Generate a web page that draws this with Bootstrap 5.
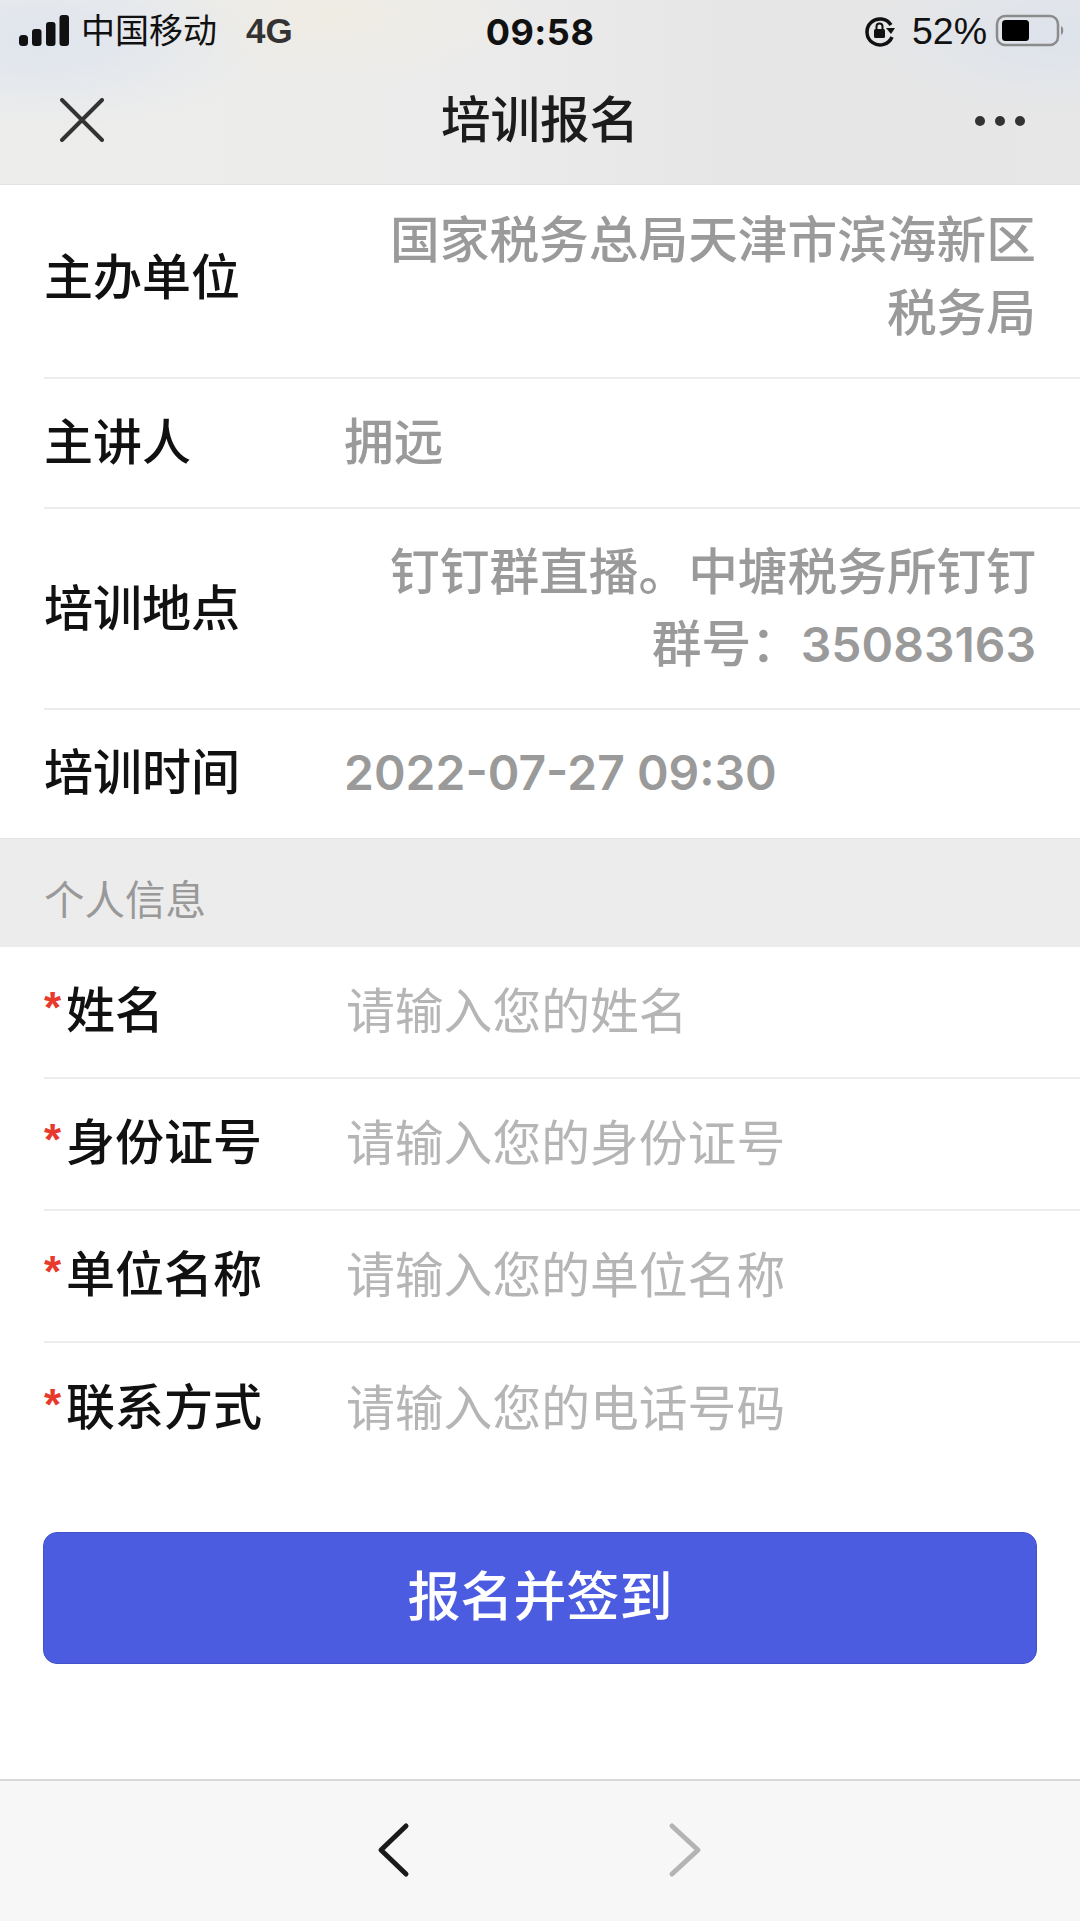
<!DOCTYPE html>
<html lang="zh-CN">
<head>
    <meta charset="UTF-8">
    <meta name="viewport" content="width=device-width, initial-scale=1.0">
    <title>培训报名</title>
    <link href="https://cdn.jsdelivr.net/npm/bootstrap@5.3.3/dist/css/bootstrap.min.css" rel="stylesheet">
    <style>
        body {
            width: 1080px;
            height: 1921px;
            overflow: hidden;
            background: #fff;
            font-family: "Liberation Sans", "Noto Sans CJK SC", sans-serif;
            color: #111;
        }

        .top-area {
            height: 185px;
            background:
                radial-gradient(ellipse 230px 90px at 40px 40px, #dfe5ee 0%, rgba(223,229,238,0) 100%),
                radial-gradient(ellipse 200px 80px at 1060px 35px, #dde3ec 0%, rgba(221,227,236,0) 100%),
                radial-gradient(ellipse 200px 70px at 330px 15px, #efece3 0%, rgba(239,236,227,0) 100%),
                linear-gradient(90deg, #ededeb 0%, #ebebeb 45%, #e6e6e6 70%, #e7e7e7 100%);
            border-bottom: 1px solid #e2e2e2;
        }

        .status-bar {
            height: 62px;
            padding: 0 15px 0 19px;
            font-size: 34px;
            color: #111;
        }

        .status-carrier {
            margin-left: 4px;
        }

        .status-4g {
            margin-left: 29px;
            font-size: 35px;
            font-weight: 700;
            color: #333;
        }

        .status-time {
            left: 0;
            right: 0;
            top: 5px;
            text-align: center;
            font-family: Inter, "Liberation Sans", sans-serif;
            font-size: 36px;
            font-weight: 700;
            letter-spacing: .5px;
            pointer-events: none;
        }

        .status-pct {
            font-size: 37.5px;
        }

        .nav-row {
            height: 122px;
            padding: 0 55px 0 60px;
        }

        .nav-icon-x {
            margin-top: -6px;
        }

        .nav-icon-more {
            margin-top: -4px;
        }

        .nav-title {
            left: 0;
            right: 0;
            top: 0;
            height: 118px;
            line-height: 118px;
            text-align: center;
            font-size: 49.5px;
            font-weight: 500;
            color: #1c1c1c;
        }

        .info-row {
            margin-left: 44px;
            padding-right: 44px;
            border-bottom: 2px solid #ececec;
            font-size: 49px;
            line-height: 72px;
        }

        .info-row.last-row {
            border-bottom: 0;
        }

        .row-label {
            flex: 0 0 300px;
            color: #111;
            font-weight: 500;
        }

        .row-value {
            flex: 1;
            color: #9a9a9a;
            font-weight: 500;
            font-size: 49.7px;
        }

        .row-value .num {
            font-family: Inter, "Liberation Sans", sans-serif;
            font-weight: 600;
            font-size: 48px;
            line-height: 1;
        }

        .h-first {
            height: 194px;
            padding-bottom: 7px;
        }

        .h-first .row-value {
            line-height: 73px;
        }

        .h-second { height: 130px; }
        .h-third { height: 201px; }
        .h-fourth {
            height: 128px;
            padding-bottom: 2px;
        }

        .section-head {
            height: 109px;
            padding: 17px 0 0 44px;
            background: #ececec;
            color: #999;
            font-size: 40.5px;
            border-top: 1px solid #e4e4e4;
        }

        .form-line {
            height: 132px;
            margin-left: 44px;
            border-bottom: 2px solid #ececec;
            font-size: 49px;
        }

        .form-line.last-row {
            border-bottom: 0;
        }

        .star {
            width: 22px;
            margin-top: -8px;
            color: #e8392d;
            font-size: 44px;
            font-weight: 700;
            line-height: 1;
        }

        .form-label-text {
            flex: 0 0 280px;
            font-weight: 500;
            color: #111;
        }

        .form-line input {
            flex: 1;
            margin-top: 2px;
            border: 0;
            outline: 0;
            padding: 0;
            background: transparent;
            font-size: 48.8px;
            font-family: inherit;
        }

        .form-line input::placeholder {
            color: #b5b5b5;
            opacity: 1;
        }

        .btn-signup {
            display: block;
            width: 994px;
            height: 132px;
            margin: 57px 0 0 43px;
            background: #4c5ce0;
            border: 1px solid #4452c8;
            border-radius: 14px;
            color: #fff;
            font-size: 53px;
            font-weight: 500;
        }

        .btn-signup:hover {
            background: #4c5ce0;
            color: #fff;
        }

        .bottom-bar {
            top: 1779px;
            left: 0;
            right: 0;
            height: 142px;
            background: #f7f7f7;
            border-top: 2px solid #d8d8d8;
        }

        .bottom-bar svg {
            left: 0;
            top: 0;
        }
    </style>
</head>
<body>
    <div class="top-area">
        <div class="status-bar d-flex align-items-center position-relative">
            <svg width="50" height="32" viewBox="0 0 50 32" class="me-2">
                <rect x="0" y="20" width="9" height="11" rx="3.5" fill="#111"/>
                <rect x="13" y="14" width="9.5" height="17" rx="3" fill="#111"/>
                <rect x="27" y="7" width="9.5" height="24" rx="3" fill="#111"/>
                <rect x="40.5" y="0" width="9.5" height="31" rx="3" fill="#111"/>
            </svg>
            <span class="status-carrier">中国移动</span>
            <span class="status-4g">4G</span>
            <div class="status-time position-absolute">09:58</div>
            <div class="ms-auto d-flex align-items-center">
                <svg width="32" height="32" viewBox="0 0 32 32" class="status-lock me-3">
                    <path d="M27 10A13 13 0 1 0 28 22" fill="none" stroke="#111" stroke-width="3.5"/>
                    <path d="M22 13h9l-4 6z" fill="#111"/>
                    <rect x="10" y="14" width="11" height="9" rx="1.5" fill="#111"/>
                    <path d="M12.5 14v-2.5a3 3 0 0 1 6 0V14" fill="none" stroke="#111" stroke-width="2"/>
                </svg>
                <span class="status-pct">52%</span>
                <svg width="70" height="34" viewBox="0 0 70 34" class="ms-2">
                    <rect x="2" y="2" width="61" height="29" rx="8" fill="none" stroke="#8b8b8b" stroke-width="2.5"/>
                    <rect x="7" y="6" width="27" height="21" rx="3.5" fill="#000"/>
                    <path d="M66 12c3 1 3 8 0 9z" fill="#8b8b8b"/>
                </svg>
            </div>
        </div>
        <div class="nav-row d-flex align-items-center justify-content-between position-relative">
            <svg width="44" height="44" viewBox="0 0 44 44" class="nav-icon-x">
                <path d="M2 2L42 42M42 2L2 42" stroke="#333" stroke-width="4" stroke-linecap="round"/>
            </svg>
            <div class="nav-title position-absolute">培训报名</div>
            <svg width="50" height="14" viewBox="0 0 50 14" class="nav-icon-more">
                <circle cx="5" cy="7" r="5" fill="#333"/>
                <circle cx="25" cy="7" r="5" fill="#333"/>
                <circle cx="45" cy="7" r="5" fill="#333"/>
            </svg>
        </div>
    </div>

    <div class="info-row h-first d-flex align-items-center">
        <div class="row-label">主办单位</div>
        <div class="row-value text-end">国家税务总局天津市滨海新区<br>税务局</div>
    </div>
    <div class="info-row h-second d-flex align-items-center">
        <div class="row-label">主讲人</div>
        <div class="row-value">拥远</div>
    </div>
    <div class="info-row h-third d-flex align-items-center">
        <div class="row-label">培训地点</div>
        <div class="row-value text-end">钉钉群直播。中塘税务所钉钉<br>群号：<span class="num">35083163</span></div>
    </div>
    <div class="info-row last-row h-fourth d-flex align-items-center">
        <div class="row-label">培训时间</div>
        <div class="row-value"><span class="num">2022-07-27 09:30</span></div>
    </div>

    <div class="section-head d-flex align-items-center">个人信息</div>

    <form>
        <div class="form-line d-flex align-items-center">
            <span class="star">*</span>
            <span class="form-label-text">姓名</span>
            <input type="text" placeholder="请输入您的姓名">
        </div>
        <div class="form-line d-flex align-items-center">
            <span class="star">*</span>
            <span class="form-label-text">身份证号</span>
            <input type="text" placeholder="请输入您的身份证号">
        </div>
        <div class="form-line d-flex align-items-center">
            <span class="star">*</span>
            <span class="form-label-text">单位名称</span>
            <input type="text" placeholder="请输入您的单位名称">
        </div>
        <div class="form-line last-row d-flex align-items-center">
            <span class="star">*</span>
            <span class="form-label-text">联系方式</span>
            <input type="text" placeholder="请输入您的电话号码">
        </div>
        <button type="button" class="btn btn-signup">报名并签到</button>
    </form>

    <div class="bottom-bar position-absolute">
        <svg width="1080" height="140" viewBox="0 0 1080 140" class="position-absolute">
            <path d="M406 45L381 69L406 93" fill="none" stroke="#1a1a1a" stroke-width="5" stroke-linecap="round" stroke-linejoin="round"/>
            <path d="M672 45L698 69L672 93" fill="none" stroke="#b4b4b4" stroke-width="5" stroke-linecap="round" stroke-linejoin="round"/>
        </svg>
    </div>

    <script src="https://cdn.jsdelivr.net/npm/bootstrap@5.3.3/dist/js/bootstrap.bundle.min.js"></script>
</body>
</html>
